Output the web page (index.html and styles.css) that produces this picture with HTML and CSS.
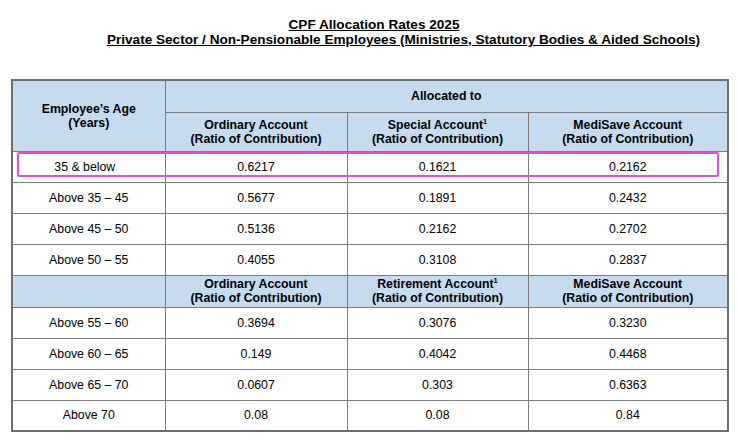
FILE: index.html
```html
<!DOCTYPE html>
<html>
<head>
<meta charset="utf-8">
<link rel="stylesheet" href="styles.css">
</head>
<body>
<header class="heading">
  <div class="title"><span>CPF Allocation Rates 2025</span></div>
  <div class="subtitle"><span>Private Sector / Non-Pensionable Employees (Ministries, Statutory Bodies &amp; Aided Schools)</span></div>
</header>
<div class="table-wrap">
  <table class="rates">
    <colgroup>
      <col class="c-age">
      <col class="c-oa">
      <col class="c-sa">
      <col class="c-ma">
    </colgroup>
    <tr class="h1">
      <th rowspan="2" class="age-head">Employee’s Age<br>(Years)</th>
      <th colspan="3">Allocated to</th>
    </tr>
    <tr class="h2">
      <th>Ordinary Account<br>(Ratio of Contribution)</th>
      <th>Special Account<sup>1</sup><br>(Ratio of Contribution)</th>
      <th>MediSave Account<br>(Ratio of Contribution)</th>
    </tr>
    <tr class="row"><td class="first">35 &amp; below</td><td>0.6217</td><td>0.1621</td><td>0.2162</td></tr>
    <tr class="row"><td>Above 35 – 45</td><td>0.5677</td><td>0.1891</td><td>0.2432</td></tr>
    <tr class="row"><td>Above 45 – 50</td><td>0.5136</td><td>0.2162</td><td>0.2702</td></tr>
    <tr class="row"><td>Above 50 – 55</td><td>0.4055</td><td>0.3108</td><td>0.2837</td></tr>
    <tr class="h3">
      <th></th>
      <th>Ordinary Account<br>(Ratio of Contribution)</th>
      <th>Retirement Account<sup>1</sup><br>(Ratio of Contribution)</th>
      <th>MediSave Account<br>(Ratio of Contribution)</th>
    </tr>
    <tr class="row"><td>Above 55 – 60</td><td>0.3694</td><td>0.3076</td><td>0.3230</td></tr>
    <tr class="row"><td>Above 60 – 65</td><td>0.149</td><td>0.4042</td><td>0.4468</td></tr>
    <tr class="row"><td>Above 65 – 70</td><td>0.0607</td><td>0.303</td><td>0.6363</td></tr>
    <tr class="row"><td>Above 70</td><td>0.08</td><td>0.08</td><td>0.84</td></tr>
  </table>
  <div class="highlight"></div>
</div>
</body>
</html>
```

FILE: styles.css
```css
html, body {
  margin: 0;
  padding: 0;
  background: #ffffff;
}
body {
  font-family: "Liberation Sans", Arial, sans-serif;
  color: #000;
  width: 740px;
  height: 440px;
  overflow: hidden;
}
.heading {
  padding-top: 17px;
  padding-left: 67px;
  font-weight: bold;
  font-size: 13.6px;
  line-height: 15px;
  text-align: center;
}
.heading span {
  text-decoration: underline;
}
.title {
  padding-right: 59px;
}
.table-wrap {
  position: relative;
  margin: 32px 0 0 11px;
  width: 716px;
}
.rates {
  border-collapse: collapse;
  table-layout: fixed;
  width: 716px;
  font-size: 12.3px;
  border: 2px solid #6e6e6e;
}
.c-age { width: 153px; }
.c-oa { width: 182px; }
.c-sa { width: 181px; }
.c-ma { width: 200px; }
.rates th, .rates td {
  border: 1px solid #7c7c7c;
  text-align: center;
  padding: 0;
  line-height: 14px;
}
.rates th {
  background: #c6dbef;
  font-weight: bold;
}
.rates td.first {
  padding-right: 8px;
}
.rates sup {
  font-size: 7.5px;
  line-height: 0;
  vertical-align: 5px;
}
.h1 { height: 32px; }
.h2 { height: 39px; }
.h3 { height: 32px; }
.row { height: 31px; }
.age-head {
  vertical-align: middle;
}
.highlight {
  position: absolute;
  left: 6px;
  top: 73px;
  width: 698px;
  height: 21px;
  border: 2px solid #e24be6;
  border-radius: 2px;
  pointer-events: none;
}
```
